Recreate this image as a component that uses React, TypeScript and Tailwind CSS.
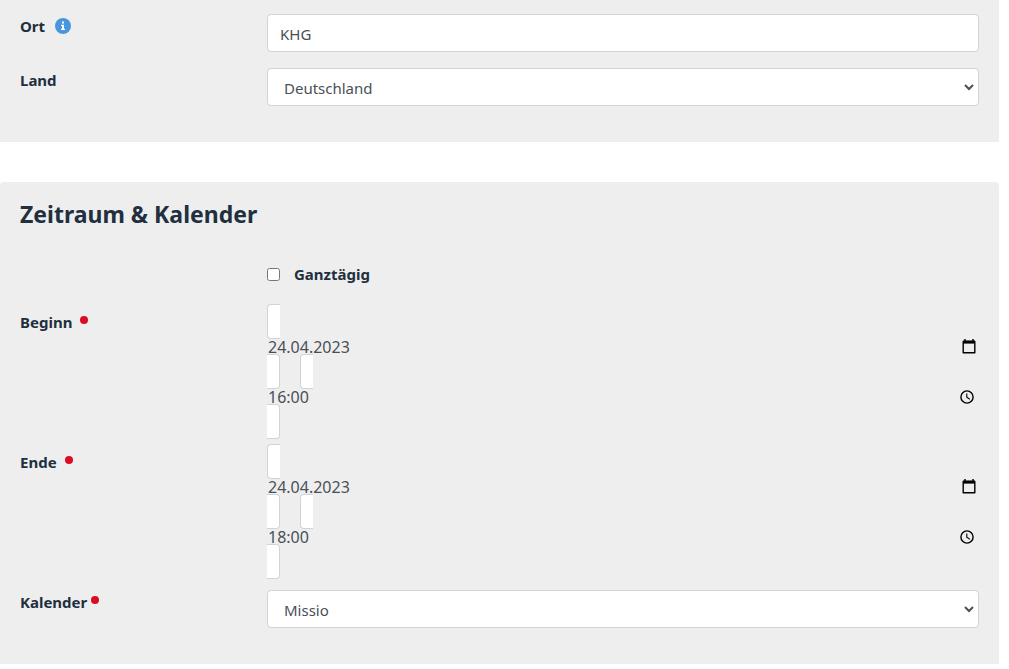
import React from "react";

const controlClass = "block w-full h-[38px] rounded border border-[#ced4da] bg-white pt-[2px] text-[15px] text-[#495057]";

const Required = ({ className = "ml-2" }: { className?: string }) => (
    <span className={`inline-block w-2 h-2 mb-1 rounded-full bg-[#dc0c23] ${className}`} aria-hidden="true"></span>
);

const InfoIcon = () => (
    <svg width="16" height="16" viewBox="0 0 16 16" className="ml-[10px]" aria-hidden="true">
        <circle cx="8" cy="8" r="8" fill="#4a96dc" />
        <path d="M7 3.5h2v2H7zM6 6.8h3v4h1V12H6v-1.2h1V8H6z" fill="#fff" />
    </svg>
);

const CalendarIcon = () => (
    <svg width="14" height="15" viewBox="0 0 14 15" className="mr-[3px]" aria-hidden="true">
        <path d="M3 0v2M11 0v2" stroke="#000" strokeWidth="1.4" />
        <path d="M1.2 2.5h11.6v11.3H1.2z" fill="none" stroke="#000" strokeWidth="1.4" strokeLinejoin="round" />
        <path d="M1 1.6h12v3H1z" fill="#000" />
    </svg>
);

const ClockIcon = () => (
    <svg width="14" height="14" viewBox="0 0 14 14" className="mr-[5px]" aria-hidden="true">
        <circle cx="7" cy="7" r="6.1" fill="none" stroke="#000" strokeWidth="1.4" />
        <path d="M6.8 3.5V7.3l3 1.9" fill="none" stroke="#000" strokeWidth="1.1" />
    </svg>
);

const Field = ({ label, children }: { label: React.ReactNode; children: React.ReactNode }) => (
    <div className="grid grid-cols-[247px_minmax(0,1fr)]">
        <div className="flex h-6 items-center text-[15px] font-bold text-[#212f3f]">{label}</div>
        <div>{children}</div>
    </div>
);

const SelectField = ({ id, value }: { id: string; value: string }) => (
    <div className="relative">
        <select id={id} className={`${controlClass} appearance-none pl-4 pr-8`} defaultValue={value}>
            <option>{value}</option>
        </select>
        <svg width="10" height="7" viewBox="0 0 10 7" className="absolute right-[5px] top-4 pointer-events-none" aria-hidden="true">
            <path d="M1 1l4 4 4-4" fill="none" stroke="#495057" strokeWidth="2" />
        </svg>
    </div>
);

// inline boxes around block inputs: the border is broken into an opening and a closing piece
const BoxStart = () => <span className="block w-[13px] h-[35px] rounded-l border border-r-0 border-[#ced4da] bg-white"></span>;
const BoxEnd = () => <span className="block w-[13px] h-[35px] rounded-r border border-l-0 border-[#ced4da] bg-white"></span>;

const DateTimeField = ({ id, name, date, time }: { id: string; name: string; date: string; time: string }) => (
    <Field label={<label htmlFor={`${id}-date`} className="mt-3">{name}<Required /></label>}>
        <BoxStart />
        <div className="flex h-[15px] items-center text-[#495057]">
            <input id={`${id}-date`} defaultValue={date} className="min-w-0 flex-1 h-[22px] pl-px outline-none" />
            <CalendarIcon />
        </div>
        <div className="flex gap-5">
            <BoxEnd />
            <BoxStart />
        </div>
        <div className="flex h-[15px] items-center text-[#495057]">
            <input aria-label={`${name} Uhrzeit`} defaultValue={time} className="min-w-0 flex-1 h-[22px] pl-px outline-none" />
            <ClockIcon />
        </div>
        <BoxEnd />
    </Field>
);

const App = () => {
    return <div className="pr-[10px] bg-white text-base font-['Noto_Sans',sans-serif]">
        <section className="flex flex-col gap-4 bg-[#eeeeee] pt-[14px] pr-5 pb-9 pl-5">
            <Field label={<><label htmlFor="ort">Ort</label><InfoIcon /></>}>
                <input id="ort" defaultValue="KHG" className={`${controlClass} px-3`} />
            </Field>
            <Field label={<label htmlFor="land">Land</label>}>
                <SelectField id="land" value="Deutschland" />
            </Field>
        </section>
        <section className="mt-10 rounded-t-sm bg-[#eeeeee] px-5 pt-4 pb-9">
            <h2 className="text-[23px] leading-8 font-bold text-[#212f3f]">Zeitraum &amp; Kalender</h2>
            <div className="mt-8 mb-[18px] ml-[247px] flex h-6 items-center">
                <input id="ganztaegig" type="checkbox" className="w-[13px] h-[13px]" />
                <label htmlFor="ganztaegig" className="ml-[14px] text-[15px] font-bold text-[#212f3f]">Ganztägig</label>
            </div>
            <div className="flex flex-col gap-[5px]">
                <DateTimeField id="beginn" name="Beginn" date="24.04.2023" time="16:00" />
                <DateTimeField id="ende" name="Ende" date="24.04.2023" time="18:00" />
            </div>
            <div className="mt-[11px]">
                <Field label={<label htmlFor="kalender">Kalender<Required className="ml-1" /></label>}>
                    <SelectField id="kalender" value="Missio" />
                </Field>
            </div>
        </section>
    </div>
};

export default App;
